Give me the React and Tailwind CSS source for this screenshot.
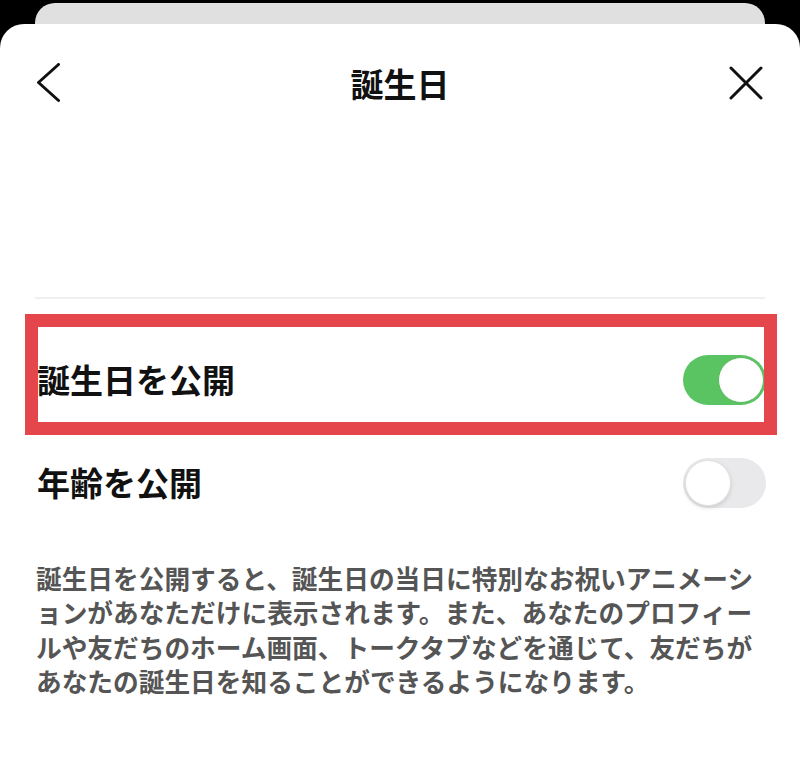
import React, { useState } from "react";

const font = { fontFamily: '"Noto Sans CJK JP", "Noto Sans", sans-serif' };

function Toggle({ on, onChange }) {
  return (
    <button
      onClick={() => onChange(!on)}
      className={`relative w-[83px] h-[50px] rounded-full flex items-center px-[2px] ${on ? "bg-[#5ac463] justify-end" : "bg-[#e9e9eb] justify-start"}`}
    >
      <span className={`w-[46px] h-[46px] rounded-full bg-white ${on ? "border border-[#58b860]" : "border border-[#e2e2e2] shadow-[0_2px_4px_rgba(0,0,0,0.12)]"}`} />
    </button>
  );
}

const lines = [
  "誕生日を公開すると、誕生日の当日に特別なお祝いアニメーシ",
  "ョンがあなただけに表示されます。また、あなたのプロフィー",
  "ルや友だちのホーム画面、トークタブなどを通じて、友だちが",
  "あなたの誕生日を知ることができるようになります。",
];

export default function App() {
  const [birthday, setBirthday] = useState(true);
  const [age, setAge] = useState(false);

  return (
    <div className="w-[800px] h-[777px] bg-black overflow-hidden" style={font}>
      {/* 後ろのシート */}
      <div className="px-[35px] pt-[3px]">
        <div className="h-[40px] rounded-t-[20px] bg-[#e0e0e0]" />
      </div>

      {/* 前のシート */}
      <div className="relative -mt-[19px] h-[753px] rounded-t-[24px] bg-white">
        <div className="pt-[24px] h-[94px] px-[37px] flex items-center justify-between">
          <button className="w-[34px] h-[40px] flex items-center">
            <svg width="24" height="40" viewBox="0 0 24 40" fill="none">
              <polyline points="21.5,1.5 1.5,19.5 21.5,37.5" stroke="#111" strokeWidth="3" strokeLinecap="round" strokeLinejoin="round" />
            </svg>
          </button>
          <h1 className="text-[33px] font-bold text-[#111] leading-none">誕生日</h1>
          <button className="w-[34px] h-[34px] flex items-center justify-end">
            <svg width="34" height="34" viewBox="0 0 34 34" fill="none">
              <path d="M2 2 L32 32 M32 2 L2 32" stroke="#111" strokeWidth="3" strokeLinecap="round" />
            </svg>
          </button>
        </div>

        <div className="h-[179px]" />
        <div className="mx-[35px] h-[2px] bg-[#f0f0f0]" />

        <div className="pt-[31px] pl-[37px] pr-[34px]">
          <div className="h-[100px] flex items-center justify-between">
            <span className="text-[33px] font-bold text-[#111]">誕生日を公開</span>
            <Toggle on={birthday} onChange={setBirthday} />
          </div>
          <div className="mt-[3px] h-[100px] flex items-center justify-between">
            <span className="text-[33px] font-bold text-[#111]">年齢を公開</span>
            <Toggle on={age} onChange={setAge} />
          </div>
        </div>

        <div className="mt-[28px] px-[36px] text-[25.7px] leading-[34.3px] font-semibold text-[#555]">
          {lines.map((l) => (
            <div key={l} className="whitespace-nowrap">{l}</div>
          ))}
        </div>

        {/* 赤い注釈枠 */}
        <div className="absolute left-[25px] top-[290px] w-[752px] h-[121px] border-[13px] border-[#e4464b] pointer-events-none" />
      </div>
    </div>
  );
}
